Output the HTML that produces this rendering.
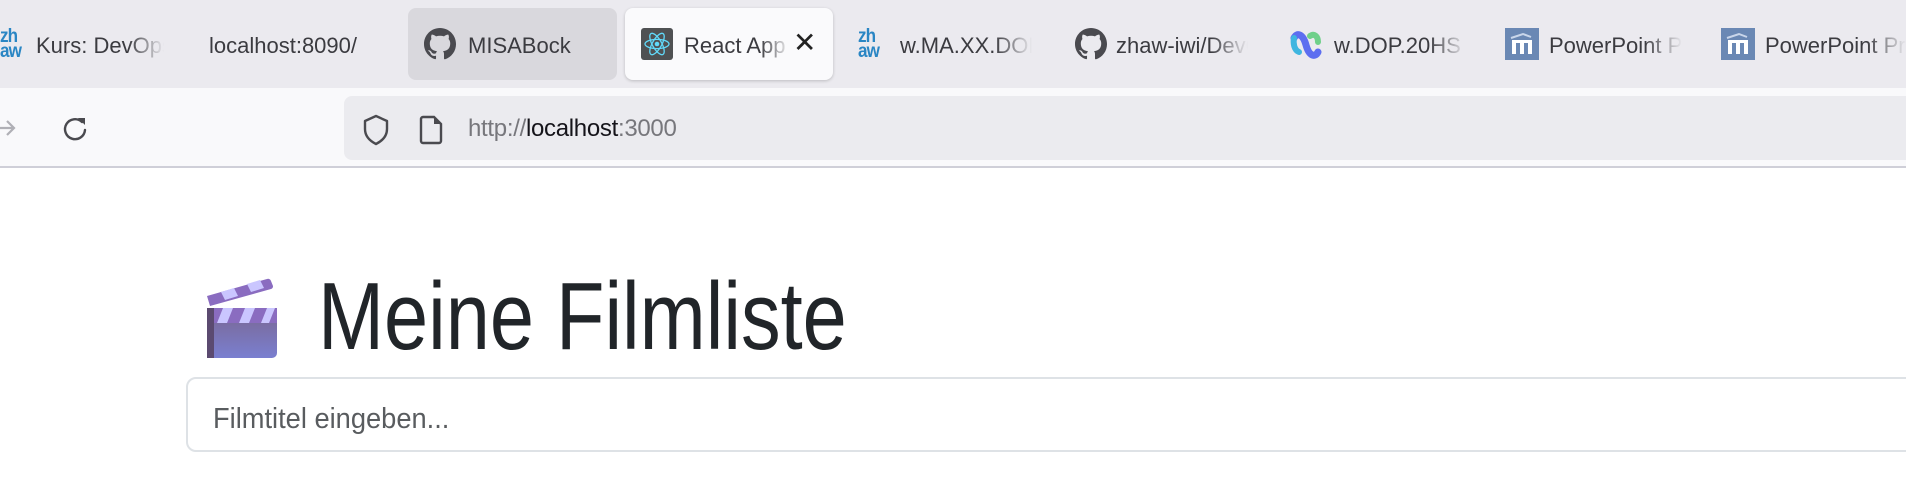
<!DOCTYPE html>
<html><head><meta charset="utf-8"><style>
*{margin:0;padding:0;box-sizing:border-box}
body{width:1906px;height:480px;overflow:hidden;background:#fff;font-family:"Liberation Sans",sans-serif;position:relative}
.abs{position:absolute}
#tabs{left:0;top:0;width:1906px;height:88px;background:#ebeaef}
.t{position:absolute;top:31px;font-size:22px;line-height:30px;color:#3b3b40;white-space:nowrap;overflow:hidden}
.fade{-webkit-mask-image:linear-gradient(to right,#000 72%,transparent);mask-image:linear-gradient(to right,#000 72%,transparent)}
#tb{left:0;top:88px;width:1906px;height:80px;background:#f9f9fb;border-bottom:2px solid #cfcfd8}
#url{left:344px;top:96px;width:1562px;height:64px;background:#ebebef;border-radius:8px 0 0 8px}
.zh{position:absolute;top:29px;font-weight:bold;color:#2a86c4;font-size:19px;line-height:15px;letter-spacing:-1px;transform:scaleX(0.9);transform-origin:0 0}
</style></head><body>
<div id="tabs" class="abs"></div>
<div class="zh" style="left:0">zh<br>aw</div>
<div class="t fade" style="left:36px;width:128px">Kurs: DevOps</div>
<div class="t" style="left:209px">localhost:8090/</div>
<div class="abs" style="left:408px;top:8px;width:209px;height:72px;background:#d9d8dd;border-radius:8px"></div>
<svg class="abs" style="left:424px;top:28px" width="32" height="32" viewBox="0 0 16 16"><path fill="#4a4a4f" d="M8 0C3.58 0 0 3.58 0 8c0 3.54 2.29 6.53 5.47 7.59.4.07.55-.17.55-.38v-1.33c-2.23.48-2.7-1.07-2.7-1.07-.36-.92-.89-1.17-.89-1.17-.73-.5.05-.49.05-.49.8.06 1.23.83 1.23.83.72 1.22 1.87.87 2.330.66.07-.52.28-.87.51-1.07-1.78-.2-3.64-.89-3.64-3.95 0-.87.31-1.59.82-2.15-.08-.2-.36-1.02.08-2.12 0 0 .67-.21 2.2.82a7.6 7.6 0 0 1 4 0c1.53-1.04 2.2-.82 2.2-.82.44 1.1.16 1.92.08 2.12.51.56.82 1.27.82 2.15 0 3.07-1.87 3.75-3.65 3.95.29.25.54.73.54 1.48v2.2c0 .21.15.46.55.38A8 8 0 0 0 16 8c0-4.42-3.58-8-8-8z"/></svg>
<div class="t" style="left:468px">MISABock</div>
<div class="abs" style="left:625px;top:8px;width:208px;height:72px;background:#fafafc;border-radius:8px;box-shadow:0 1px 3px rgba(0,0,0,.2)"></div>
<svg class="abs" style="left:641px;top:28px" width="32" height="32" viewBox="0 0 32 32"><rect width="32" height="32" rx="3" fill="#4f5153"/><g fill="none" stroke="#61dafb" stroke-width="1.3"><ellipse cx="16" cy="16" rx="12" ry="4.6"/><ellipse cx="16" cy="16" rx="12" ry="4.6" transform="rotate(60 16 16)"/><ellipse cx="16" cy="16" rx="12" ry="4.6" transform="rotate(120 16 16)"/></g><circle cx="16" cy="16" r="2.3" fill="#61dafb"/></svg>
<div class="t fade" style="left:684px;width:106px">React App</div>
<div class="t" style="left:793px;top:28px;font-size:28px;color:#222">✕</div>
<div class="zh" style="left:858px">zh<br>aw</div>
<div class="t fade" style="left:900px;width:132px">w.MA.XX.DOP</div>
<svg class="abs" style="left:1075px;top:28px" width="32" height="32" viewBox="0 0 16 16"><path fill="#4a4a4f" d="M8 0C3.58 0 0 3.58 0 8c0 3.54 2.29 6.53 5.47 7.59.4.07.55-.17.55-.38v-1.33c-2.23.48-2.7-1.07-2.7-1.07-.36-.92-.89-1.17-.89-1.17-.73-.5.05-.49.05-.49.8.06 1.23.83 1.23.83.72 1.22 1.87.87 2.33.66.07-.52.28-.87.51-1.07-1.78-.2-3.64-.89-3.64-3.95 0-.87.31-1.59.82-2.15-.08-.2-.36-1.02.08-2.12 0 0 .67-.21 2.2.82a7.6 7.6 0 0 1 4 0c1.53-1.04 2.2-.82 2.2-.82.44 1.1.16 1.92.08 2.12.51.56.82 1.27.82 2.15 0 3.07-1.87 3.75-3.65 3.95.29.25.54.73.54 1.48v2.2c0 .21.15.46.55.38A8 8 0 0 0 16 8c0-4.42-3.58-8-8-8z"/></svg>
<div class="t fade" style="left:1116px;width:132px">zhaw-iwi/DevOps</div>
<svg class="abs" style="left:1290px;top:30px" width="32" height="30" viewBox="0 0 32 30"><path d="M4 8c3-6 9-4 12 7s9 13 12 7" fill="none" stroke="#5d6ef0" stroke-width="7" stroke-linecap="round"/><path d="M20 6c4-3 8 0 8 6" fill="none" stroke="#6fd08a" stroke-width="6" stroke-linecap="round"/><path d="M4 8c-1 5 0 12 5 14" fill="none" stroke="#3fb6e0" stroke-width="6" stroke-linecap="round"/></svg>
<div class="t fade" style="left:1334px;width:132px">w.DOP.20HS</div>
<svg class="abs" style="left:1505px;top:28px" width="34" height="32" viewBox="0 0 34 32"><rect width="34" height="32" fill="#6a88b4"/><path d="M7 12h20v14h-4V15h-4v11h-4V15h-4v11H7z" fill="#fff"/><path d="M6 10l12-4 8 3" fill="none" stroke="#c9d6ea" stroke-width="2"/></svg>
<div class="t fade" style="left:1549px;width:133px">PowerPoint Präs</div>
<svg class="abs" style="left:1721px;top:28px" width="34" height="32" viewBox="0 0 34 32"><rect width="34" height="32" fill="#6a88b4"/><path d="M7 12h20v14h-4V15h-4v11h-4V15h-4v11H7z" fill="#fff"/><path d="M6 10l12-4 8 3" fill="none" stroke="#c9d6ea" stroke-width="2"/></svg>
<div class="t fade" style="left:1765px;width:141px">PowerPoint Präs</div>

<div id="tb" class="abs"></div>
<svg class="abs" style="left:0;top:116px" width="20" height="24" viewBox="0 0 20 24"><path d="M0 12h14M7 5l7 7-7 7" fill="none" stroke="#b0b0b6" stroke-width="2.2"/></svg>
<svg class="abs" style="left:60px;top:114px" width="30" height="30" viewBox="0 0 30 30"><path d="M22 8A10 10 0 1 0 25 16" fill="none" stroke="#4a4a4f" stroke-width="2.4" stroke-linecap="round"/><path d="M18 4h7v7z" fill="#4a4a4f"/></svg>
<div id="url" class="abs"></div>
<svg class="abs" style="left:362px;top:114px" width="28" height="32" viewBox="0 0 28 32"><path d="M14 2L3 7v8c0 7 5 12 11 15 6-3 11-8 11-15V7z" fill="none" stroke="#4a4a4f" stroke-width="2.4" stroke-linejoin="round"/></svg>
<svg class="abs" style="left:419px;top:115px" width="26" height="30" viewBox="0 0 26 30"><path d="M4 2h11l7 7v17a2 2 0 0 1-2 2H4a2 2 0 0 1-2-2V4a2 2 0 0 1 2-2z" fill="none" stroke="#4a4a4f" stroke-width="2.4"/><path d="M15 2v7h7z" fill="#4a4a4f"/></svg>
<div class="abs" style="left:468px;top:114px;font-size:24px;line-height:30px;color:#77777c;letter-spacing:-0.3px">http://<span style="color:#15141a">localhost</span>:3000</div>

<svg class="abs" style="left:205px;top:278px" width="74" height="82" viewBox="0 0 74 82"><defs><linearGradient id="g" x1="0" y1="0" x2="0" y2="1"><stop offset="0" stop-color="#7a6690"/><stop offset="1" stop-color="#7a7fd0"/></linearGradient></defs><rect x="2" y="30" width="70" height="50" rx="5" fill="url(#g)"/><rect x="2" y="30" width="70" height="15" fill="#8a6cc0"/><rect x="2" y="30" width="7" height="50" fill="#5b4a70"/><path d="M18 30h10l-6 15H12zM40 30h10l-6 15H34zM62 30h8l-6 15h-8z" fill="#cac6ff"/><path d="M2 18L62 1a3 3 0 0 1 4 2l2 5a3 3 0 0 1-2 3L5 28z" fill="#8a6cc0"/><path d="M16 14l13-4 4 8-13 4zM42 6l13-4 4 8-13 4z" fill="#cac6ff"/></svg>
<div class="abs" style="left:318px;top:262px;font-size:96px;line-height:110px;color:#212529;transform:scaleX(0.826);transform-origin:0 0;white-space:nowrap">Meine Filmliste</div>
<div class="abs" style="left:186px;top:377px;width:1740px;height:75px;border:2px solid #dee2e6;border-radius:10px;background:#fff"></div>
<div class="abs" style="left:213px;top:402px;font-size:29px;line-height:34px;color:#595c5f;white-space:nowrap;transform:scaleX(0.94);transform-origin:0 0">Filmtitel eingeben...</div>
</body></html>
